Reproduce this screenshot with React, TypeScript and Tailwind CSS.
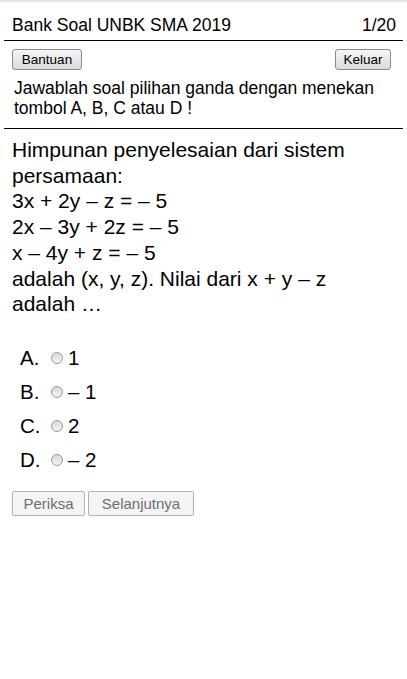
import React from "react";

const options = [
  { label: "A.", value: "1" },
  { label: "B.", value: "– 1" },
  { label: "C.", value: "2" },
  { label: "D.", value: "– 2" },
];

function Radio() {
  return (
    <span className="inline-block w-[12px] h-[12px] rounded-full border border-[#9a9a9a] bg-gradient-to-b from-[#d8d8d8] to-[#f4f4f4] mr-[2px] shrink-0" />
  );
}

export default function App() {
  return (
    <div className="w-[407px] h-[679px] bg-white text-black font-['Liberation_Sans',Arial,sans-serif] border-t-[2px] border-[#e6e6e6]">
      <div className="flex justify-between items-center pl-[12px] pr-[11px] pt-[8px] h-[38px] text-[17.5px]">
        <span>Bank Soal UNBK SMA 2019</span>
        <span>1/20</span>
      </div>
      <div className="mx-[4px] h-px bg-black" />
      <div className="px-[12px] pt-[8px]">
        <div className="flex justify-between">
          <button className="h-[21px] w-[70px] rounded-[3px] border border-[#8a8a8a] bg-gradient-to-b from-[#f6f6f6] to-[#dadada] text-[13.5px] leading-none text-black">
            Bantuan
          </button>
          <button className="h-[21px] w-[56px] mr-[4px] rounded-[3px] border border-[#8a8a8a] bg-gradient-to-b from-[#f6f6f6] to-[#dadada] text-[13.5px] leading-none text-black">
            Keluar
          </button>
        </div>
        <p className="pl-[2px] pt-[8px] text-[17.5px] leading-[20px]">
          Jawablah soal pilihan ganda dengan menekan tombol A, B, C atau D !
        </p>
      </div>
      <div className="mx-[4px] mt-[10px] h-px bg-black" />
      <div className="px-[12px] pt-[8px] text-[21px] leading-[25.7px]">
        <p>Himpunan penyelesaian dari sistem persamaan:</p>
        <p>3x + 2y – z = – 5</p>
        <p>2x – 3y + 2z = – 5</p>
        <p>x – 4y + z = – 5</p>
        <p>adalah (x, y, z). Nilai dari x + y – z adalah …</p>
      </div>
      <div className="pl-[20px] pt-[24px] flex flex-col text-[20.5px]">
        {options.map((o) => (
          <div key={o.label} className="flex items-center h-[34px]">
            <span className="w-[31px]">{o.label}</span>
            <Radio />
            <span className="ml-[3px]">{o.value}</span>
          </div>
        ))}
      </div>
      <div className="flex gap-[3px] px-[12px] pt-[14px]">
        <button className="h-[25px] w-[73px] border border-[#b4b4b4] rounded-[2px] bg-[#f4f4f4] text-[#6b6f75] text-[15px] leading-none">
          Periksa
        </button>
        <button className="h-[25px] w-[106px] border border-[#b4b4b4] rounded-[2px] bg-[#f4f4f4] text-[#6b6f75] text-[15px] leading-none">
          Selanjutnya
        </button>
      </div>
    </div>
  );
}
